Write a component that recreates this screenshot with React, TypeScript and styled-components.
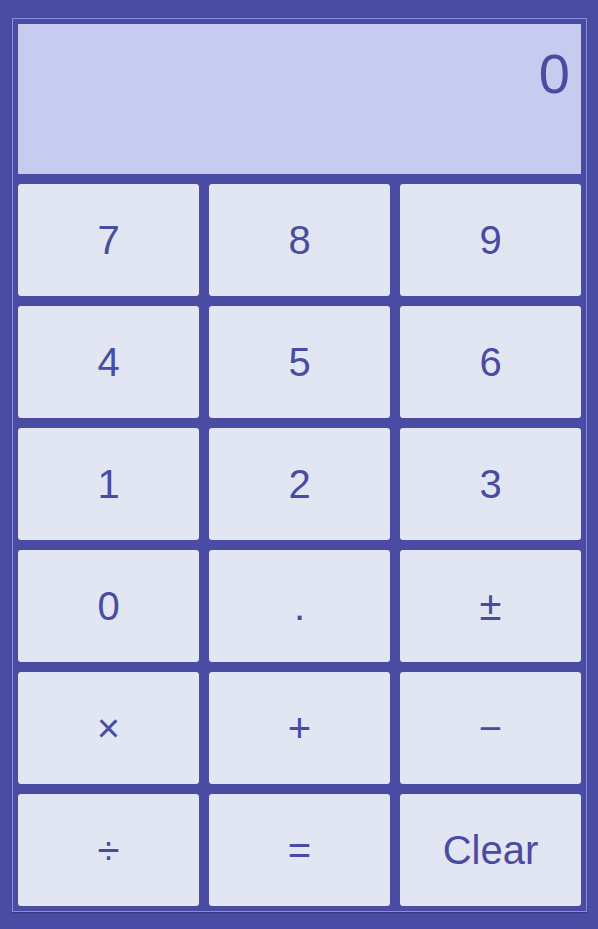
import React, { useState } from "react";
import styled, { createGlobalStyle } from "styled-components";

const GlobalStyle = createGlobalStyle`
  html, body { margin: 0; padding: 0; background: #4a4ba2; }
  body { font-family: "Liberation Sans", Arial, sans-serif; }
`;

const Page = styled.div`
  padding: 18px 12px;
  min-height: 929px;
  box-sizing: border-box;
`;

const Frame = styled.div`
  border: 1px solid #8a8ce0;
  padding: 5px;
  box-shadow: 0 1px 1px rgba(40, 40, 100, 0.5);
  display: flex;
  flex-direction: column;
  gap: 10px;
  width: 575px;
  box-sizing: border-box;
`;

const Display = styled.div`
  height: 150px;
  background: #c8cbf0;
  color: #4a4ba2;
  font-size: 56px;
  text-align: right;
  padding: 22px 11px 0 0;
  box-sizing: border-box;
  line-height: 1;
`;

const Keys = styled.div`
  display: grid;
  grid-template-columns: repeat(3, 1fr);
  grid-auto-rows: 112px;
  gap: 10px;
`;

const Key = styled.button`
  background: #e1e6f2;
  color: #4a4ba2;
  border: none;
  border-radius: 3px;
  font-family: "Liberation Sans", Arial, sans-serif;
  font-size: 40px;
  padding: 0;
  cursor: pointer;
`;

const labels = ["7", "8", "9", "4", "5", "6", "1", "2", "3", "0", ".", "±", "×", "+", "−", "÷", "=", "Clear"];

export default function App() {
  const [value] = useState("0");
  return (
    <>
      <GlobalStyle />
      <Page>
        <Frame>
          <Display>{value}</Display>
          <Keys>
            {labels.map((l) => (
              <Key key={l}>{l}</Key>
            ))}
          </Keys>
        </Frame>
      </Page>
    </>
  );
}
